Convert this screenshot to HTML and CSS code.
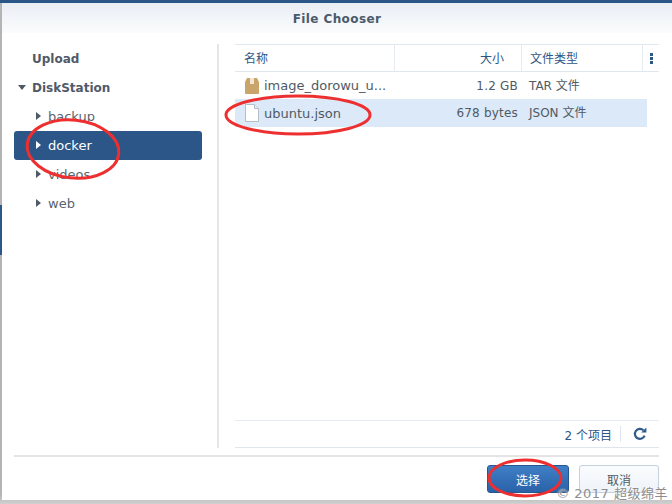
FILE: index.html

```html
<!DOCTYPE html>
<html lang="zh">
<head>
  <meta charset="UTF-8" />
  <title>File Chooser</title>
  <link rel="stylesheet" href="styles.css">
</head>
<body>
  <div class="desk">
    <div class="side-mark"></div>
    <div class="dialog">
      <div class="title">File Chooser</div>
      <div class="body">
        <div class="tree">
          <div class="node top">Upload</div>
          <div class="node top"><span class="arrow down"></span>DiskStation</div>
          <div class="node sub"><span class="arrow"></span>backup</div>
          <div class="node sub selected"><span class="arrow"></span>docker</div>
          <div class="node sub"><span class="arrow"></span>videos</div>
          <div class="node sub"><span class="arrow"></span>web</div>
        </div>
        <div class="files">
          <div class="head">
            <div class="col name">名称</div>
            <div class="col size">大小</div>
            <div class="col type">文件类型</div>
            <div class="col more"><span></span><span></span><span></span></div>
          </div>
          <div class="row">
            <div class="name cell">
              <svg class="file-icon" width="16" height="18" viewBox="0 0 16 18">
                <path d="M1 5 L3 1 H13 L15 5 V16 Q15 17 14 17 H2 Q1 17 1 16 Z" fill="#c9a56c"/>
                <path d="M6 1 H10 V7 H6 Z" fill="#f1e6d2"/>
              </svg>
              <span>image_dorowu_u...</span>
            </div>
            <div class="size cell">1.2 GB</div>
            <div class="type cell">TAR 文件</div>
          </div>
          <div class="row active">
            <div class="name cell">
              <svg class="file-icon" width="16" height="18" viewBox="0 0 16 18">
                <path d="M1.5 .5 H10.5 L14.5 4.5 V17.5 H1.5 Z" fill="#fff" stroke="#b4bdc8"/>
                <path d="M10.5 .5 V4.5 H14.5" fill="#e6ebf1" stroke="#b4bdc8"/>
              </svg>
              <span>ubuntu.json</span>
            </div>
            <div class="size cell">678 bytes</div>
            <div class="type cell">JSON 文件</div>
          </div>
          <div class="status">
            <span class="count">2 个项目</span>
            <span class="refresh">
              <svg width="14" height="14" viewBox="0 0 14 14">
                <path d="M11.6 8.6 A5 5 0 1 1 10.4 3.2" fill="none" stroke="#2f5a8c" stroke-width="2.2"/>
                <path d="M8.2 5.6 H13.4 V.6 Z" fill="#2f5a8c"/>
              </svg>
            </span>
          </div>
        </div>
      </div>
      <div class="footer">
        <button class="btn primary">选择</button>
        <button class="btn">取消</button>
      </div>
    </div>

    <svg class="marks" width="672" height="504" viewBox="0 0 672 504">
      <ellipse cx="73" cy="149" rx="46" ry="29" transform="rotate(6 73 149)"/>
      <ellipse cx="298" cy="115" rx="72" ry="19"/>
      <ellipse cx="525" cy="478" rx="36" ry="18"/>
    </svg>
    <div class="watermark">© 2017 超级绵羊</div>
  </div>
</body>
</html>
```

FILE: styles.css

```css
* {
  box-sizing: border-box;
}
body {
  margin: 0;
  font-family: "DejaVu Sans", "Noto Sans CJK SC", sans-serif;
  font-size: 12px;
  color: #505a64;
}
.desk {
  position: relative;
  width: 672px;
  height: 504px;
  overflow: hidden;
  background: linear-gradient(#b4b4b4 98%, #d0d0d0);
  border-top: 3px solid #2b5687;
  padding: 0 0 4px 2px;
}
.side-mark {
  position: absolute;
  left: 0;
  top: 202px;
  width: 2px;
  height: 50px;
  background: #2b5687;
}
.dialog {
  height: 100%;
  background: #fff;
  display: flex;
  flex-direction: column;
}
.title {
  height: 30px;
  line-height: 33px;
  text-align: center;
  font-weight: bold;
  letter-spacing: .4px;
  color: #4a5a6c;
  background: linear-gradient(#e9eef5, #fbfcfd);
}
.body {
  display: flex;
  height: 404px;
  margin: 11px 13px 0 12px;
  gap: 16px;
}
.tree {
  flex: none;
  width: 205px;
  border-right: 2px solid #e6e6e6;
  padding-right: 15px;
}
.node {
  height: 29px;
  line-height: 29px;
  position: relative;
  font-size: 13px;
  color: #5a6470;
}
.node.top {
  padding-left: 18px;
  font-weight: bold;
  font-size: 12px;
  line-height: 31px;
  color: #505a68;
}
.node.sub {
  padding-left: 34px;
  border-radius: 3px;
}
.selected {
  background: #2b5687;
  color: #fff;
}
.arrow {
  position: absolute;
  left: 22px;
  top: 10px;
  border-left: 5px solid #4f5a66;
  border-top: 4px solid transparent;
  border-bottom: 4px solid transparent;
}
.selected .arrow {
  border-left-color: #fff;
}
.arrow.down {
  left: 4px;
  top: 12px;
  border-top: 5px solid #4f5a66;
  border-left: 4px solid transparent;
  border-right: 4px solid transparent;
  border-bottom: 0;
}
.files {
  flex: 1;
  display: flex;
  flex-direction: column;
  position: relative;
}
.head {
  display: flex;
  height: 28px;
  border-top: 1px solid #e1e7f0;
  border-bottom: 1px solid #e1e7f0;
  color: #2b5687;
}
.col {
  line-height: 29px;
  padding: 0 9px;
  border-right: 1px solid #e6ebf2;
}
.name {
  width: 160px;
}
.size {
  width: 127px;
  text-align: right;
}
.type {
  width: 121px;
}
.col.size {
  padding-right: 17px;
}
.col.type {
  padding-left: 8px;
}
.more {
  width: 16px;
  padding: 0;
  border-right: 0;
  display: flex;
  flex-direction: column;
  align-items: center;
  justify-content: center;
  gap: 1px;
}
.more span {
  width: 3px;
  height: 3px;
  background: #2b5687;
}
.row {
  display: flex;
  height: 27px;
  width: 412px;
}
.row.active {
  height: 28px;
  background: #dce9f9;
}
.cell {
  line-height: 29px;
  padding: 0 7px;
  white-space: nowrap;
}
.cell.name {
  display: flex;
  align-items: center;
  gap: 4px;
  font-size: 13px;
  padding-left: 9px;
  padding-right: 0;
}
.cell.size {
  padding-right: 4px;
  letter-spacing: .2px;
}
.file-icon {
  flex: none;
}
.status {
  margin-top: auto;
  height: 28px;
  border-top: 1px solid #e6ebf2;
  border-bottom: 1px solid #dfe5ee;
  display: flex;
  align-items: center;
  justify-content: flex-end;
  color: #2b5687;
}
.count {
  padding-right: 8px;
}
.refresh {
  width: 39px;
  height: 16px;
  border-left: 1px solid #dfe5ee;
  display: flex;
  align-items: center;
  justify-content: center;
}
.footer {
  margin: 7px 13px 0 12px;
  border-top: 2px solid #e4e4e4;
  padding-top: 8px;
  display: flex;
  justify-content: flex-end;
  gap: 10px;
}
.btn {
  width: 80px;
  height: 28px;
  font: inherit;
  color: #505a64;
  border: 1px solid #c4d0dd;
  border-radius: 3px;
  background: linear-gradient(#fafcfe, #eef3f9);
}
.btn.primary {
  width: 82px;
  color: #fff;
  border-color: #26568f;
  background: linear-gradient(#3f7fc6, #2a62a8);
}
.marks {
  position: absolute;
  left: 0;
  top: -3px;
  pointer-events: none;
}
.marks ellipse {
  fill: none;
  stroke: #ee2f2f;
  stroke-width: 3;
}
.watermark {
  position: absolute;
  right: 4px;
  top: 480px;
  font-size: 13px;
  letter-spacing: .5px;
  color: #8d8d8d;
  text-shadow: 0 0 2px #fff;
}
```
